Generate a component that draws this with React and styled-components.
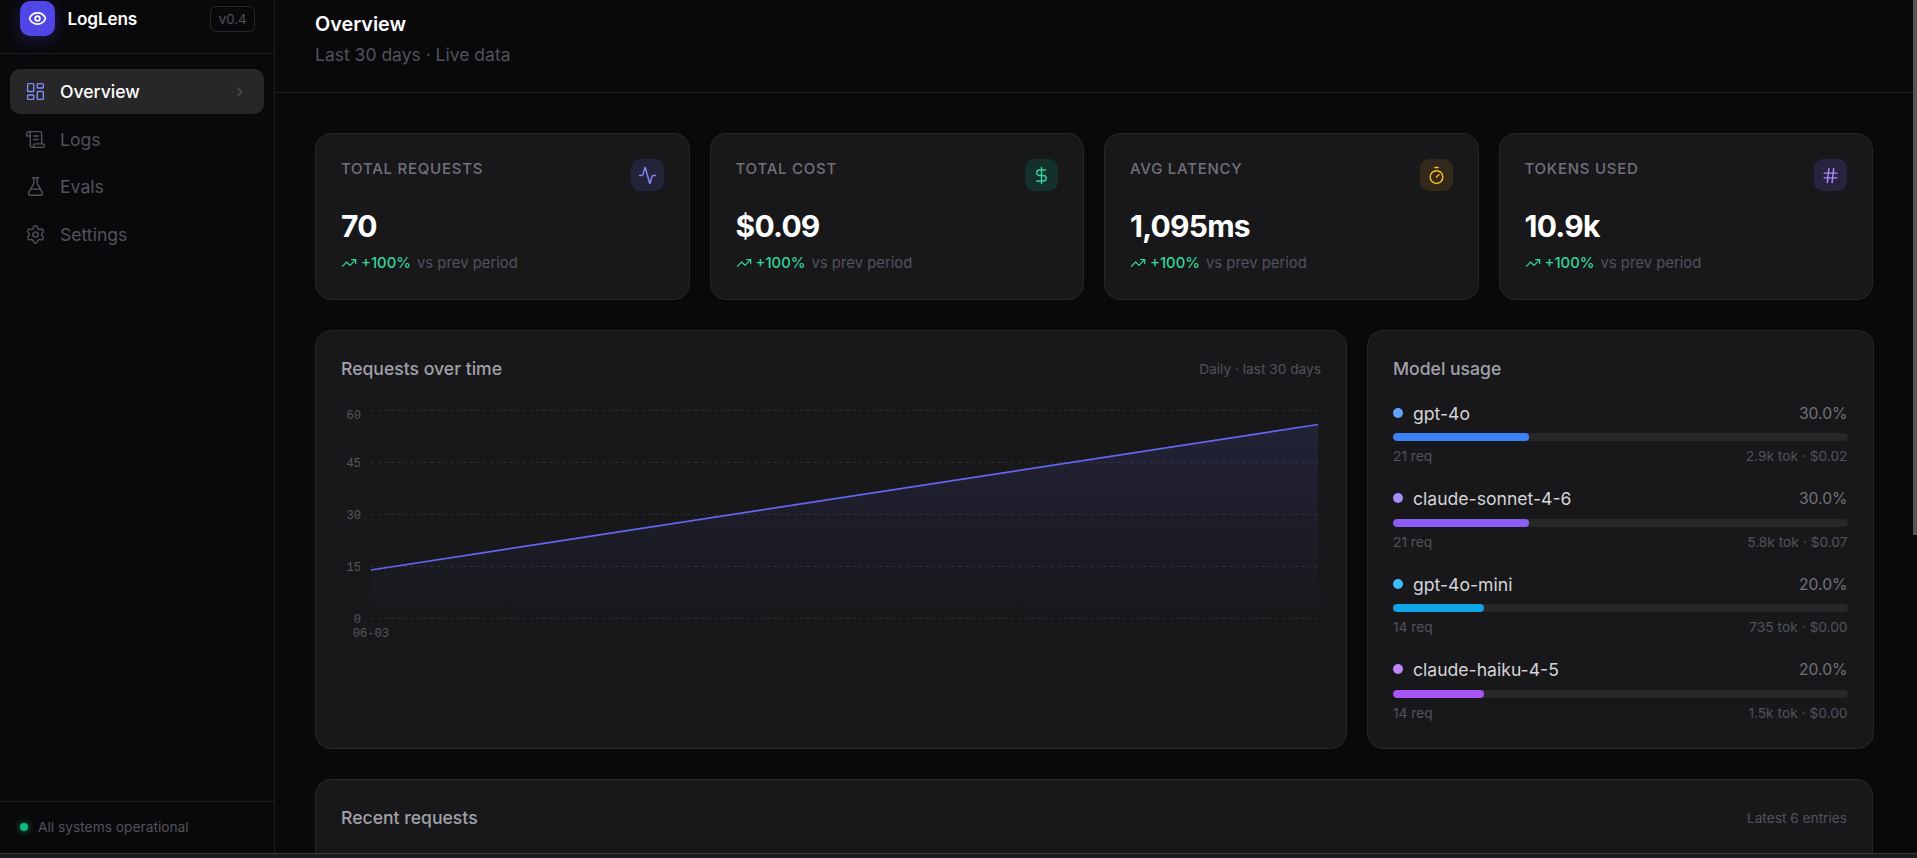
import React from "react";
import styled, { createGlobalStyle } from "styled-components";
import {
  Eye, LayoutDashboard, ScrollText, FlaskConical, Settings, ChevronRight,
  Activity, DollarSign, Timer, Hash, TrendingUp,
} from "lucide-react";

const Global = createGlobalStyle`
  html, body { margin: 0; padding: 0; background: #09090b; overflow: hidden; }
  body { font-family: Inter, "Noto Sans", sans-serif; }
  * { box-sizing: border-box; }
`;

const Shell = styled.div`
  height: 858px; display: flex; flex-direction: column; overflow: hidden;
  background: #09090b; color: #fff;
`;
const Workspace = styled.div`display: flex; flex: 1; min-height: 0;`;
const StatusStrip = styled.div`
  height: 5px; flex: none; background: #1c1c1f; border-top: 1px solid #3a3a3d;
`;
const Sidebar = styled.aside`
  width: 275px; flex: none; display: flex; flex-direction: column;
  border-right: 1px solid #1e1e21; background: #09090b;
`;
const Brand = styled.div`
  height: 54px; flex: none; display: flex; align-items: flex-start; gap: 12.5px;
  padding: 1px 19px 0 20px; border-bottom: 1px solid #1e1e21;
`;
const LogoMark = styled.div`
  width: 35px; height: 35px; border-radius: 10px; background: #4f46e5;
  display: flex; align-items: center; justify-content: center; flex: none;
  box-shadow: 0 4px 16px rgba(79, 70, 229, 0.3);
  color: #fff;
`;
const BrandName = styled.span`
  font-size: 17.2px; font-weight: 600; line-height: 36px; flex: 1; letter-spacing: -0.01em;
`;
const VersionBadge = styled.span`
  margin-top: 5px; height: 26px; padding: 0 7.5px; display: flex; align-items: center;
  border: 1px solid #27272a; border-radius: 6px; font-size: 13.2px; color: #52525b;
`;
const Nav = styled.nav`
  flex: 1; display: flex; flex-direction: column; gap: 2.5px; padding: 15px 10px 0;
`;
const NavItem = styled.div`
  height: 45px; display: flex; align-items: center; gap: 14.5px; padding: 0 14.5px;
  border-radius: 10px; font-size: 17.6px;
  font-weight: ${(p) => (p.$active ? 500 : 400)};
  color: ${(p) => (p.$active ? "#fff" : "#52525b")};
  background: ${(p) => (p.$active ? "#27272a" : "transparent")};
  svg:first-child { color: ${(p) => (p.$active ? "#818cf8" : "#52525b")}; flex: none; }
`;
const NavLabel = styled.span`flex: 1;`;
const Chevron = styled(ChevronRight)`color: #52525b; margin-right: 2px;`;
const SideFooter = styled.div`
  height: 52px; flex: none; display: flex; align-items: center; gap: 10px; padding: 0 20px 2px;
  border-top: 1px solid #1e1e21; font-size: 13.75px; color: #52525b;
`;
const StatusDot = styled.span`
  width: 8px; height: 8px; border-radius: 50%; background: #10b981;
  box-shadow: 0 0 6px rgba(16, 185, 129, 0.7);
`;
const Main = styled.main`flex: 1; min-width: 0; overflow: hidden;`;
const ScrollTrack = styled.div`width: 4px; flex: none;`;
const ScrollThumb = styled.div`height: 535px; background: #555558;`;
const PageHeader = styled.header`
  height: 93px; padding: 9px 40px 0; border-bottom: 1px solid #1e1e21;
`;
const PageTitle = styled.h1`
  margin: 0; font-size: 19.8px; line-height: 30px; font-weight: 600; color: #fff;
`;
const PageSub = styled.p`
  margin: 3px 0 0; font-size: 17.5px; line-height: 26px; color: #52525b;
`;
const Body = styled.div`
  padding: 40px; display: flex; flex-direction: column; gap: 30px;
`;
const StatGrid = styled.div`
  display: grid; grid-template-columns: repeat(4, 1fr); gap: 20px;
`;
const Card = styled.section`
  background: #18181b; border: 1px solid #27272a; border-radius: 16px; padding: 25px;
`;
const StatCard = styled(Card)`height: 167px;`;
const StatTop = styled.div`
  display: flex; justify-content: space-between; align-items: flex-start;
`;
const StatLabel = styled.span`
  font-size: 15px; line-height: 20px; font-weight: 500; letter-spacing: 0.05em; color: #71717a;
`;
const StatIcon = styled.div`
  width: 33px; height: 32px; border-radius: 9px; display: flex; align-items: center;
  justify-content: center; background: ${(p) => p.$bg}; color: ${(p) => p.$fg};
`;
const StatValue = styled.div`
  margin-top: 16px; font-size: 30px; line-height: 38px; font-weight: 700; letter-spacing: -0.025em; color: #fff;
`;
const Delta = styled.div`
  margin-top: 8px; display: flex; align-items: center; gap: 4px; font-size: 14.85px; line-height: 20px; color: #52525b;
`;
const DeltaValue = styled.span`color: #34d399; font-weight: 500; margin-right: 2px;`;
const DeltaIcon = styled(TrendingUp)`color: #34d399; flex: none;`;
const ChartRow = styled.div`
  display: grid; grid-template-columns: 1fr 506.5px; gap: 20px; margin-right: 0.5px;
`;
const PanelHead = styled.div`
  display: flex; justify-content: space-between; align-items: center; height: 25px;
`;
const PanelTitle = styled.h2`
  margin: 0; font-size: 17.6px; font-weight: 500; color: #a1a1aa;
`;
const PanelNote = styled.span`font-size: 13.7px; color: #52525b;`;
const ChartCard = styled(Card)`height: 419px;`;
const ChartSvg = styled.svg`display: block; margin-top: 19px; overflow: visible;`;
const AxisText = styled.text`
  font-family: "Liberation Mono", monospace; font-size: 12.1px; fill: #56565e;
`;
const ModelCard = styled(Card)`height: 419px;`;
const ModelList = styled.div`
  margin-top: 20px; display: flex; flex-direction: column; gap: 21.5px;
`;
const ModelRow = styled.div`display: flex; flex-direction: column;`;
const ModelTop = styled.div`
  height: 24px; display: flex; align-items: center; gap: 10px;
`;
const ModelDot = styled.span`
  width: 10px; height: 10px; border-radius: 50%; background: ${(p) => p.$c}; margin-top: -1px;
`;
const ModelName = styled.span`flex: 1; font-size: 17.6px; color: #d4d4d8;`;
const ModelPct = styled.span`font-size: 15.7px; color: #71717a;`;
const Track = styled.div`
  margin-top: 8px; height: 8px; border-radius: 4px; background: #27272a; overflow: hidden;
`;
const Fill = styled.div`height: 100%; border-radius: 4px; background: ${(p) => p.$c};`;
const ModelBottom = styled.div`
  margin-top: 6px; height: 18px; display: flex; justify-content: space-between; align-items: center;
  font-size: 13.75px; color: #52525b;
`;
const RecentCard = styled(Card)`height: 200px;`;

const stats = [
  { label: "TOTAL REQUESTS", value: "70", Icon: Activity, bg: "#23233a", fg: "#818cf8" },
  { label: "TOTAL COST", value: "$0.09", Icon: DollarSign, bg: "#14302a", fg: "#34d399" },
  { label: "AVG LATENCY", value: "1,095ms", Icon: Timer, bg: "#33291a", fg: "#fbbf24" },
  { label: "TOKENS USED", value: "10.9k", Icon: Hash, bg: "#2a2340", fg: "#a78bfa" },
];
const models = [
  { name: "gpt-4o", pct: 30, req: "21 req", meta: "2.9k tok · $0.02", dot: "#60a5fa", fill: "#3b82f6" },
  { name: "claude-sonnet-4-6", pct: 30, req: "21 req", meta: "5.8k tok · $0.07", dot: "#a78bfa", fill: "#8b5cf6" },
  { name: "gpt-4o-mini", pct: 20, req: "14 req", meta: "735 tok · $0.00", dot: "#38bdf8", fill: "#0ea5e9" },
  { name: "claude-haiku-4-5", pct: 20, req: "14 req", meta: "1.5k tok · $0.00", dot: "#c084fc", fill: "#a855f7" },
];
const nav = [
  { label: "Overview", Icon: LayoutDashboard, active: true },
  { label: "Logs", Icon: ScrollText },
  { label: "Evals", Icon: FlaskConical },
  { label: "Settings", Icon: Settings },
];

const gridY = [
  { v: 60, y: 10.5, label: 15 }, { v: 45, y: 62.5, label: 62.5 }, { v: 30, y: 114.5, label: 114.5 },
  { v: 15, y: 166.5, label: 166.5 }, { v: 0, y: 218.5, label: 218.5 },
];
const X0 = 30, X1 = 977;

function RequestsChart() {
  return (
    <ChartSvg width="980" height="300" viewBox="0 0 980 300">
      <defs>
        <linearGradient id="area" x1="0" y1="0" x2="0" y2="1">
          <stop offset="0%" stopColor="#6366f1" stopOpacity="0.13" />
          <stop offset="100%" stopColor="#6366f1" stopOpacity="0" />
        </linearGradient>
      </defs>
      {gridY.map((g) => (
        <line key={g.v} x1={X0} x2={X1} y1={g.y} y2={g.y} stroke="#2e2e32" strokeDasharray="3.3 3.3" />
      ))}
      <path d={`M${X0} 170 L${X1} 24.5 L${X1} 218 L${X0} 218 Z`} fill="url(#area)" />
      <path d={`M${X0} 170 L${X1} 24.5`} stroke="#6366f1" strokeWidth="1.65" fill="none" />
      {gridY.map((g) => (
        <AxisText key={g.v} x="20" y={g.label + 4} textAnchor="end">{g.v}</AxisText>
      ))}
      <AxisText x={X0} y="236.5" textAnchor="middle">06-03</AxisText>
    </ChartSvg>
  );
}

export default function App() {
  return (
    <Shell>
      <Global />
      <Workspace>
        <Sidebar>
          <Brand>
            <LogoMark><Eye size={19} strokeWidth={2.2} /></LogoMark>
            <BrandName>LogLens</BrandName>
            <VersionBadge>v0.4</VersionBadge>
          </Brand>
          <Nav>
            {nav.map(({ label, Icon, active }) => (
              <NavItem key={label} $active={active}>
                <Icon size={21} strokeWidth={1.6} />
                <NavLabel>{label}</NavLabel>
                {active && <Chevron size={15.4} />}
              </NavItem>
            ))}
          </Nav>
          <SideFooter>
            <StatusDot />
            <span>All systems operational</span>
          </SideFooter>
        </Sidebar>
        <Main>
          <PageHeader>
            <PageTitle>Overview</PageTitle>
            <PageSub>Last 30 days · Live data</PageSub>
          </PageHeader>
          <Body>
            <StatGrid>
              {stats.map(({ label, value, Icon, bg, fg }) => (
                <StatCard key={label}>
                  <StatTop>
                    <StatLabel>{label}</StatLabel>
                    <StatIcon $bg={bg} $fg={fg}><Icon size={19} strokeWidth={1.8} /></StatIcon>
                  </StatTop>
                  <StatValue>{value}</StatValue>
                  <Delta>
                    <DeltaIcon size={16} strokeWidth={1.8} />
                    <DeltaValue>+100%</DeltaValue>
                    <span>vs prev period</span>
                  </Delta>
                </StatCard>
              ))}
            </StatGrid>
            <ChartRow>
              <ChartCard>
                <PanelHead>
                  <PanelTitle>Requests over time</PanelTitle>
                  <PanelNote>Daily · last 30 days</PanelNote>
                </PanelHead>
                <RequestsChart />
              </ChartCard>
              <ModelCard>
                <PanelHead><PanelTitle>Model usage</PanelTitle></PanelHead>
                <ModelList>
                  {models.map((m) => (
                    <ModelRow key={m.name}>
                      <ModelTop>
                        <ModelDot $c={m.dot} />
                        <ModelName>{m.name}</ModelName>
                        <ModelPct>{m.pct.toFixed(1)}%</ModelPct>
                      </ModelTop>
                      <Track><Fill $c={m.fill} style={{ width: `${m.pct}%` }} /></Track>
                      <ModelBottom><span>{m.req}</span><span>{m.meta}</span></ModelBottom>
                    </ModelRow>
                  ))}
                </ModelList>
              </ModelCard>
            </ChartRow>
            <RecentCard>
              <PanelHead>
                <PanelTitle>Recent requests</PanelTitle>
                <PanelNote>Latest 6 entries</PanelNote>
              </PanelHead>
            </RecentCard>
          </Body>
        </Main>
        <ScrollTrack><ScrollThumb /></ScrollTrack>
      </Workspace>
      <StatusStrip />
    </Shell>
  );
}
